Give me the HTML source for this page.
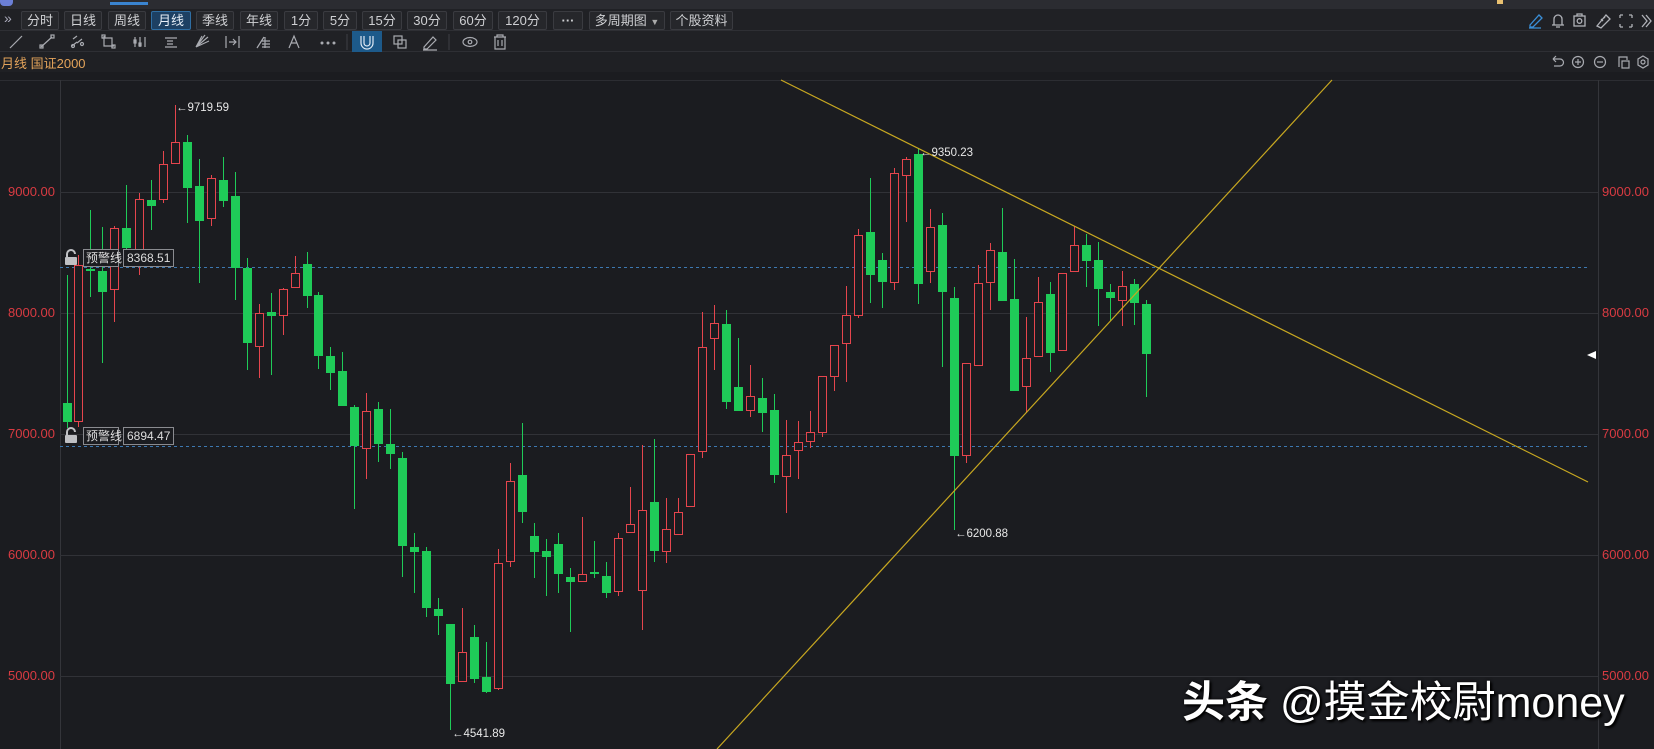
<!DOCTYPE html>
<html><head><meta charset="utf-8"><style>
*{margin:0;padding:0;box-sizing:border-box}
body{width:1654px;height:749px;overflow:hidden;background:#1b1c20;font-family:"Liberation Sans","Noto Sans CJK SC",sans-serif;position:relative}
.top{position:absolute;left:0;top:0;width:1654px;height:9px;background:#2b2c31}
.row1{position:absolute;left:0;top:9px;width:1654px;height:22px;background:#202125;border-bottom:1px solid #2e2f34}
.btn{position:absolute;top:2px;height:19px;background:#26272b;border:1px solid #3a3b40;color:#cfd0d3;font-size:13px;line-height:17px;text-align:center;border-radius:2px}
.btn.on{background:#1d4063;border-color:#2f6ea3;color:#e6eef7}
.row2{position:absolute;left:0;top:31px;width:1654px;height:21px;background:#202125;border-bottom:1px solid #2e2f34}
.row3{position:absolute;left:0;top:52px;width:1654px;height:20px;background:#1f2024}
.ttl{position:absolute;left:1px;top:53px;color:#e3a35a;font-size:13px}
.lbl{position:absolute;color:#d93b42;font-size:13px}
.wm{position:absolute;left:1182px;top:678px;color:#fff;font-size:43px;line-height:50px;text-shadow:2px 2px 2px #000,0 0 3px #000;white-space:nowrap}
</style></head><body>
<div class="top"><div style="position:absolute;left:0;top:0;width:13px;height:6px;background:#6b7fd6;border-radius:0 0 4px 4px"></div><div style="position:absolute;left:110px;top:2px;width:38px;height:3px;background:#3a84d0"></div><div style="position:absolute;left:1497px;top:0;width:6px;height:4px;background:#e8c070"></div></div>
<div class="row1">
<span style="position:absolute;left:4px;top:1px;color:#aab;font-size:14px">»</span>
<div class="btn" style="left:21px;width:38px">分时</div>
<div class="btn" style="left:64px;width:38px">日线</div>
<div class="btn" style="left:108px;width:38px">周线</div>
<div class="btn on" style="left:151px;width:40px">月线</div>
<div class="btn" style="left:196px;width:38px">季线</div>
<div class="btn" style="left:240px;width:38px">年线</div>
<div class="btn" style="left:284px;width:34px">1分</div>
<div class="btn" style="left:323px;width:34px">5分</div>
<div class="btn" style="left:362px;width:40px">15分</div>
<div class="btn" style="left:407px;width:40px">30分</div>
<div class="btn" style="left:453px;width:40px">60分</div>
<div class="btn" style="left:498px;width:49px">120分</div>
<div class="btn" style="left:553px;width:30px;font-weight:bold">···</div>
<div class="btn" style="left:589px;width:76px">多周期图 <span style="font-size:9px;color:#aaa">▼</span></div>
<div class="btn" style="left:670px;width:63px">个股资料</div>
<svg style="position:absolute;left:1525px;top:0" width="129" height="22" fill="none" stroke="#b0b2b8" stroke-width="1.3">
<path d="M5 16 L14 6 L17 9 L8 18 L5 18 Z M4 19 H16" stroke="#3a8fd8"/>
<path d="M29 16 V10 a4 4 0 0 1 8 0 V16 H27 H39 M31 18 h4"/>
<rect x="49" y="7" width="11" height="10"/><circle cx="54.5" cy="12" r="2.3"/><path d="M52 7 V5 H57 V7"/>
<path d="M72 17 L81 6 L85 10 L76 19 Z M76 10 l2 2 M79 8 l1 1"/>
<path d="M95 6 h3 M95 6 v3 M107 6 h-3 M107 6 v3 M95 18 h3 M95 18 v-3 M107 18 h-3 M107 18 v-3"/>
<path d="M117 6 l5 6 l-5 6 M121 6 l5 6 l-5 6"/>
</svg>
</div>
<div class="row2">
<svg width="520" height="21" fill="none" stroke="#a9abb1" stroke-width="1.2" style="position:absolute;left:0;top:0">
<path d="M10 17 L22 5"/>
<path d="M41 16 L52 6"/><rect x="40" y="14" width="3" height="3"/><rect x="51" y="4" width="3" height="3"/>
<path d="M73 8 l4 -3 M77 12 l5 -4 M72 15 l5 -4"/><circle cx="73" cy="15" r="1.5"/><circle cx="82" cy="13" r="1.5"/>
<path d="M104 5 V15 H114 M102 7 H112 V17"/><rect x="102" y="4" width="3" height="3"/><rect x="112" y="14" width="3" height="3"/>
<path d="M135 6 V16 M140 6 V16 M145 6 V16"/><rect x="134" y="9" width="2" height="3"/><rect x="139" y="12" width="2" height="3"/>
<path d="M165 7 H177 M167 10 H173 M167 13 H173 M165 16 H177"/>
<path d="M196 16 L208 6 M196 16 L205 4 M196 16 L209 10 M196 16 L202 5"/>
<path d="M226 5 V17 M239 5 V17 M229 11 H236 M233 8 L236 11 L233 14"/>
<path d="M257 17 L264 6 M262 10 H270 M262 13 H270 M262 16 H270 M265 6 V17"/>
<path d="M289 17 L294 5 L299 17 M291 12 H297"/>
<circle cx="322" cy="12" r="0.9" fill="#a9abb1"/><circle cx="328" cy="12" r="0.9" fill="#a9abb1"/><circle cx="334" cy="12" r="0.9" fill="#a9abb1"/>
<path d="M347 3 V19" stroke="#3a3b40"/>
<rect x="352" y="0" width="30" height="21" fill="#1d5a8a" stroke="none"/>
<path d="M361 5 V12 a6 6 0 0 0 12 0 V5 M364 5 V12 a3 3 0 0 0 6 0 V5" stroke="#dfeaf5"/>
<rect x="394" y="5" width="8" height="8"/><rect x="398" y="9" width="8" height="8"/>
<path d="M424 16 L433 6 L436 9 L427 18 H424 Z M423 19 H437"/>
<path d="M449 3 V19" stroke="#3a3b40"/>
<ellipse cx="470" cy="11" rx="7" ry="4.5"/><circle cx="470" cy="11" r="1.8"/>
<path d="M494 6 H506 M497 6 V4 H503 V6 M495 6 V18 H505 V6 M498 9 V15 M502 9 V15"/>
</svg>
</div>
<div class="row3"></div>
<div class="ttl">月线 国证2000</div>
<svg style="position:absolute;left:1548px;top:52px" width="106" height="20" fill="none" stroke="#a9abb1" stroke-width="1.2">
<path d="M5 7 H12 a3.5 3.5 0 0 1 0 7 H6 M5 7 l3 -3 M5 7 l3 3"/>
<circle cx="30" cy="10" r="5.5"/><path d="M27 10 h6 M30 7 v6"/>
<circle cx="52" cy="10" r="5.5"/><path d="M49 10 h6"/>
<path d="M71 15 V5 H79 V8 M74 9 h7 v7 h-7 z"/>
<path d="M95 4 l5 3 v6 l-5 3 l-5 -3 v-6 z"/><circle cx="95" cy="10" r="2"/>
</svg>

<svg style="position:absolute;left:0;top:0" width="1654" height="749">
<line x1="0" y1="80.5" x2="1654" y2="80.5" stroke="#2c2d32"/>
<line x1="60.5" y1="80" x2="60.5" y2="749" stroke="#34353a"/>
<line x1="1598.5" y1="80" x2="1598.5" y2="749" stroke="#34353a"/>
<g stroke="#313237">
<line x1="60" y1="192.5" x2="1598" y2="192.5"/><line x1="60" y1="313.5" x2="1598" y2="313.5"/>
<line x1="60" y1="434.5" x2="1598" y2="434.5"/><line x1="60" y1="555.5" x2="1598" y2="555.5"/>
<line x1="60" y1="676.5" x2="1598" y2="676.5"/>
</g>
<g stroke="#3d78b0" stroke-dasharray="3,3">
<line x1="60" y1="267.5" x2="1588" y2="267.5"/><line x1="60" y1="446.5" x2="1588" y2="446.5"/>
</g>
<g id="c"></g>
<line x1="781" y1="80" x2="1588" y2="482" stroke="#c8a820" stroke-width="1.2"/>
<line x1="717" y1="749" x2="1332" y2="80" stroke="#c8a820" stroke-width="1.2"/>
<path d="M1587 355 l9 -4 v8 z" fill="#fff"/>
<g fill="#e8e8e8" font-size="11.5" font-family="Liberation Sans,sans-serif">
<text x="176" y="111">←9719.59</text><text x="920" y="156">←9350.23</text>
<text x="955" y="537">←6200.88</text><text x="452" y="737">←4541.89</text>
</g>
<g font-size="12" font-family="Liberation Sans,Noto Sans CJK SC,sans-serif">
<rect x="83.5" y="249.5" width="35" height="17" fill="#1b1c20" stroke="#8a8b90"/><text x="86" y="262" fill="#ddd">预警线</text>
<rect x="123.5" y="249.5" width="50" height="17" fill="#1b1c20" stroke="#8a8b90"/><text x="127" y="262" fill="#ddd">8368.51</text>
<rect x="83.5" y="427.5" width="35" height="17" fill="#1b1c20" stroke="#8a8b90"/><text x="86" y="440" fill="#ddd">预警线</text>
<rect x="123.5" y="427.5" width="50" height="17" fill="#1b1c20" stroke="#8a8b90"/><text x="127" y="440" fill="#ddd">6894.47</text>
</g>
<g fill="#bfc0c4"><rect x="65" y="257" width="12" height="8" rx="1"/><path d="M67 257 v-3 a4 4 0 0 1 8 0" fill="none" stroke="#bfc0c4" stroke-width="2"/>
<rect x="65" y="435" width="12" height="8" rx="1"/><path d="M67 435 v-3 a4 4 0 0 1 8 0" fill="none" stroke="#bfc0c4" stroke-width="2"/></g>
</svg>
<div class="lbl" style="left:8px;top:184px">9000.00</div>
<div class="lbl" style="left:8px;top:305px">8000.00</div>
<div class="lbl" style="left:8px;top:426px">7000.00</div>
<div class="lbl" style="left:8px;top:547px">6000.00</div>
<div class="lbl" style="left:8px;top:668px">5000.00</div>
<div class="lbl" style="left:1602px;top:184px">9000.00</div>
<div class="lbl" style="left:1602px;top:305px">8000.00</div>
<div class="lbl" style="left:1602px;top:426px">7000.00</div>
<div class="lbl" style="left:1602px;top:547px">6000.00</div>
<div class="lbl" style="left:1602px;top:668px">5000.00</div>
<div class="wm"><b>头条</b> @摸金校尉money</div>
<script>
var d=`67 g 403 422 275 428
78 r 265 422 255 427
90 g 269 271 210 297
102 g 271 292 227 363
114 r 228 290 226 322
126 g 228 248 185 250
139 r 199 265 193 275
151 g 200 206 180 230
163 r 164 200 151 203
175 r 142 164 105 164
187 g 142 188 135 223
199 g 186 221 159 283
211 r 178 219 175 226
223 g 180 201 157 207
235 g 196 268 172 300
247 g 268 343 258 370
259 r 313 347 304 378
271 g 312 316 293 375
283 r 289 316 288 335
295 r 273 288 256 288
307 g 264 296 252 308
318 g 295 356 292 369
330 g 356 373 347 390
342 g 371 406 352 406
354 g 407 446 405 509
366 r 411 449 393 479
378 g 409 444 402 462
390 g 444 454 409 469
402 g 458 546 452 577
414 g 547 552 533 593
426 g 551 608 547 617
438 g 609 616 598 635
450 g 624 684 624 730
462 r 652 682 608 682
474 g 637 679 625 683
486 g 677 692 642 693
498 r 563 689 549 690
510 r 481 562 463 567
522 g 475 512 423 523
534 g 536 552 523 578
546 g 551 557 539 596
558 g 544 574 533 593
570 g 577 582 568 632
582 r 574 582 517 582
594 g 572 573 541 578
606 g 576 593 562 598
618 r 538 592 533 596
630 r 524 533 487 533
642 r 510 591 445 630
654 g 502 551 439 562
666 r 529 552 498 563
678 r 512 535 498 535
690 r 454 507 454 507
702 r 347 452 312 458
714 r 323 339 305 370
726 g 324 402 310 409
738 g 387 411 338 411
750 r 396 411 365 417
762 g 398 413 378 432
774 g 410 475 394 483
786 r 455 477 420 513
798 r 442 451 421 479
810 r 432 442 411 448
822 r 376 433 376 437
834 r 345 377 345 391
846 r 315 344 286 382
858 r 235 316 229 318
870 g 232 275 178 303
882 g 260 282 253 308
894 r 173 283 168 290
906 r 159 176 157 222
918 g 154 284 149 304
930 r 227 272 209 283
942 g 225 292 213 367
954 g 298 456 287 530
966 r 363 456 363 463
978 r 283 366 265 366
990 r 250 283 243 310
1002 g 252 301 208 301
1014 g 299 391 259 391
1026 r 358 387 317 413
1038 r 302 357 277 357
1050 g 294 353 282 372
1062 r 273 351 273 351
1074 r 245 272 226 272
1086 g 245 261 234 287
1098 g 260 289 242 326
1110 g 292 298 284 321
1122 r 286 301 271 326
1134 g 284 303 279 325
1146 g 304 354 300 397`;
var s='';d.split('\n').forEach(function(l){var a=l.trim().split(/\s+/),x=+a[0],t=+a[2],b=+a[3],h=+a[4],w=+a[5];
if(b-t<2)b=t+2;
if(a[1]=='g'){s+='<line x1="'+(x+.5)+'" y1="'+h+'" x2="'+(x+.5)+'" y2="'+w+'" stroke="#1fcb58"/><rect x="'+(x-4)+'" y="'+t+'" width="9" height="'+(b-t)+'" fill="#1fcb58"/>';}
else{s+='<line x1="'+(x+.5)+'" y1="'+h+'" x2="'+(x+.5)+'" y2="'+t+'" stroke="#e5454d"/><line x1="'+(x+.5)+'" y1="'+b+'" x2="'+(x+.5)+'" y2="'+w+'" stroke="#e5454d"/><rect x="'+(x-3.5)+'" y="'+(t+.5)+'" width="8" height="'+(b-t-1)+'" fill="#1b1c20" stroke="#e5454d"/>';}});
document.getElementById('c').innerHTML=s;
</script>
</body></html>
